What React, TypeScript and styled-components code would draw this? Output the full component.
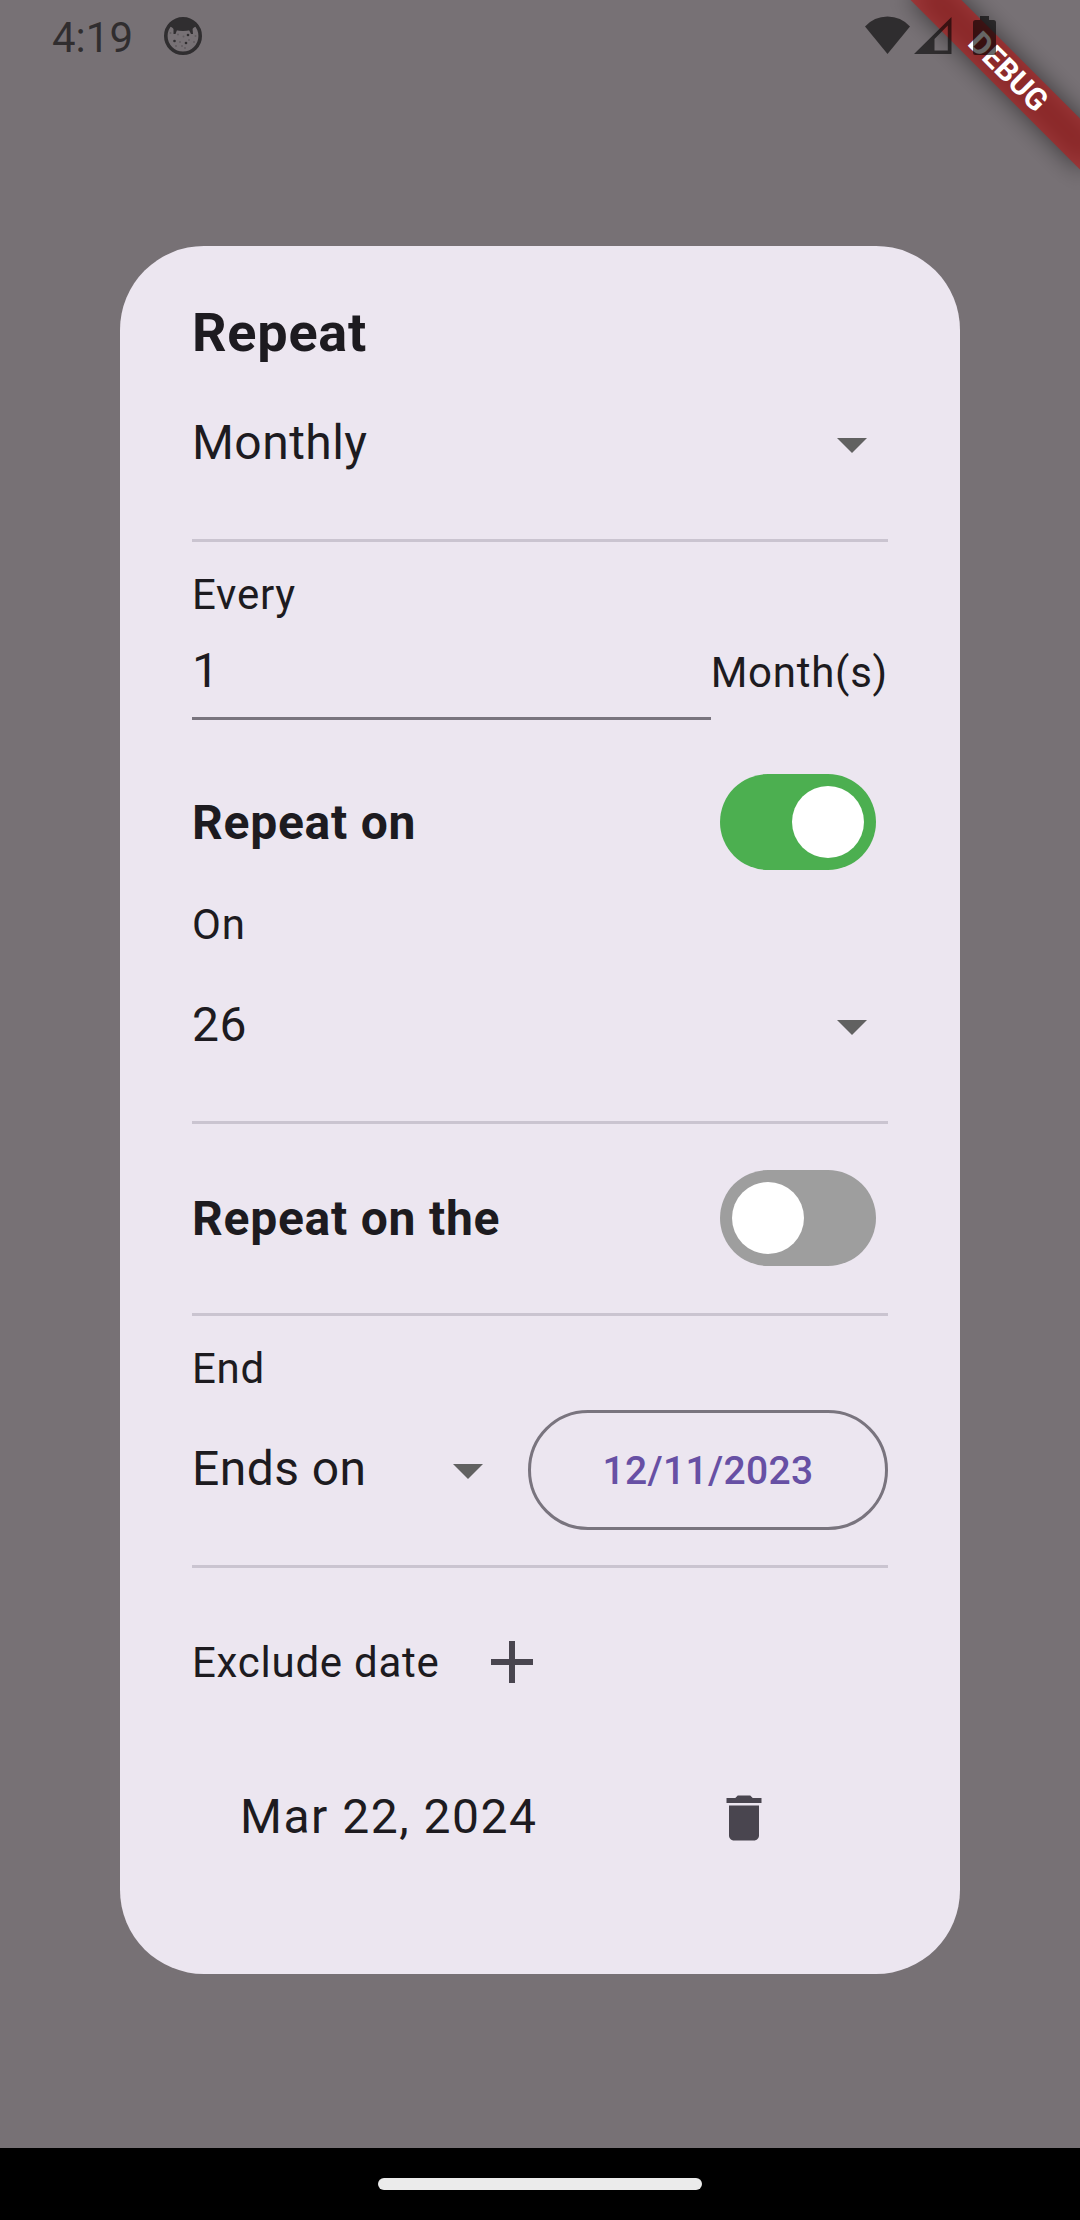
import React, { useState } from "react";
import styled, { createGlobalStyle } from "styled-components";

const GlobalStyle = createGlobalStyle`
  *, *::before, *::after { box-sizing: border-box; }
  body { margin: 0; background: #777175; }
`;

const Screen = styled.div`
  position: relative;
  display: flex;
  flex-direction: column;
  width: 1080px;
  height: 2220px;
  overflow: hidden;
  background: #777175;
  color: #1d1b20;
  font-family: Roboto, "Noto Sans", sans-serif;
`;

const StatusBar = styled.header`
  position: relative;
  z-index: 2;
  display: flex;
  align-items: center;
  height: 72px;
  padding: 0 82px 0 52px;
  color: rgba(0, 0, 0, 0.6);
`;

const Clock = styled.span`
  font-size: 42px;
  line-height: 50px;
  padding-top: 4px;
  width: 111px;
`;

const StatusIcons = styled.div`
  display: flex;
  margin-left: auto;
`;

const Main = styled.main`
  flex: 1;
  padding: 174px 120px 0;
`;

const Dialog = styled.section`
  display: flex;
  flex-direction: column;
  height: 1728px;
  padding: 48px 72px 0;
  border-radius: 84px;
  background: #ece6f0;
`;

const Title = styled.h1`
  margin: 0;
  height: 78px;
  font-size: 54px;
  line-height: 78px;
  font-weight: 700;
  letter-spacing: 0.75px;
`;

const SelectBox = styled.button<{ $width?: number }>`
  display: flex;
  align-items: center;
  justify-content: space-between;
  width: ${(p) => (p.$width ? `${p.$width}px` : "100%")};
  height: 144px;
  padding: 0;
  border: 0;
  background: none;
  color: inherit;
  font: 400 48px/72px Roboto, "Noto Sans", sans-serif;
  letter-spacing: 0.45px;
`;

const SelectText = styled.span`
  padding-bottom: 2px;
`;

const Divider = styled.hr<{ $top: number }>`
  flex: none;
  width: 100%;
  height: 3px;
  margin: ${(p) => p.$top}px 0 0;
  border: 0;
  background: #cac4d0;
`;

const Label = styled.div<{ $top?: number }>`
  height: 60px;
  margin-top: ${(p) => p.$top ?? 0}px;
  font-size: 42px;
  line-height: 62px;
  letter-spacing: 0.75px;
  white-space: nowrap;
`;

const IntervalRow = styled.div`
  display: flex;
  align-items: center;
  height: 96px;
`;

const IntervalInput = styled.div`
  flex: 1;
  height: 96px;
  border-bottom: 3px solid #79747e;
  font-size: 48px;
  line-height: 72px;
  padding-top: 11px;
  letter-spacing: 1.5px;
`;

const ToggleRow = styled.div<{ $top: number }>`
  display: flex;
  align-items: center;
  justify-content: space-between;
  height: 96px;
  margin-top: ${(p) => p.$top}px;
  padding-right: 12px;
`;

const ToggleLabel = styled.span`
  padding-top: 2px;
  font-size: 48px;
  line-height: 68px;
  font-weight: 700;
  letter-spacing: 0.75px;
`;

const Track = styled.button<{ $on: boolean }>`
  display: flex;
  justify-content: ${(p) => (p.$on ? "flex-end" : "flex-start")};
  width: 156px;
  height: 96px;
  padding: 12px;
  border: 0;
  border-radius: 48px;
  background: ${(p) => (p.$on ? "#4caf50" : "#9e9e9e")};
`;

const Knob = styled.span`
  width: 72px;
  height: 72px;
  border-radius: 50%;
  background: #fff;
`;

const EndRow = styled.div`
  display: flex;
  align-items: center;
  justify-content: space-between;
  height: 144px;
`;

const DateButton = styled.button`
  width: 360px;
  height: 120px;
  padding: 2px 0 0;
  border: 3px solid #79747e;
  border-radius: 60px;
  background: none;
  color: #6750a4;
  font: 500 39px/60px Roboto, "Noto Sans", sans-serif;
  letter-spacing: 0.3px;
`;

const ExcludeRow = styled.div`
  display: flex;
  align-items: center;
  height: 144px;
  margin-top: 22px;
`;

const IconButton = styled.button<{ $size: number }>`
  display: grid;
  place-items: center;
  width: ${(p) => p.$size}px;
  height: ${(p) => p.$size}px;
  padding: 0;
  border: 0;
  background: none;
  color: #49454f;
`;

const ExcludedItem = styled.div`
  display: flex;
  align-items: center;
  justify-content: space-between;
  height: 168px;
  padding: 0 72px 0 48px;
`;

const ExcludedDate = styled.span`
  font-size: 48px;
  line-height: 72px;
  letter-spacing: 1.5px;
  padding-bottom: 2px;
`;

const NavBar = styled.footer`
  display: grid;
  place-items: center;
  height: 72px;
  background: #000;
`;

const HomePill = styled.div`
  width: 324px;
  height: 12px;
  border-radius: 6px;
  background: #ebebeb;
`;

const DebugRibbon = styled.div`
  position: absolute;
  z-index: 1;
  top: 54px;
  left: 888px;
  width: 240px;
  height: 36px;
  transform: rotate(45deg);
  color: #fff;
  font-size: 30.6px;
  line-height: 36px;
  font-weight: 700;
  text-align: center;

  &::before,
  &::after {
    content: "";
    position: absolute;
    inset: 0;
  }

  &::before {
    z-index: -2;
    background: rgba(0, 0, 0, 0.5);
    filter: blur(12px);
  }

  &::after {
    z-index: -1;
    background: rgba(183, 28, 28, 0.627);
  }
`;

const DropArrow = () => (
  <svg width="72" height="72" viewBox="0 0 24 24" fill="#616161">
    <path d="M7 10l5 5 5-5z" />
  </svg>
);

const AddIcon = () => (
  <svg width="72" height="72" viewBox="0 0 24 24" fill="currentColor">
    <path d="M19 13h-6v6h-2v-6H5v-2h6V5h2v6h6v2z" />
  </svg>
);

const DeleteIcon = () => (
  <svg width="60" height="60" viewBox="0 0 24 24" fill="currentColor">
    <path d="M6 19c0 1.1.9 2 2 2h8c1.1 0 2-.9 2-2V7H6v12zM19 4h-3.5l-1-1h-5l-1 1H5v2h14V4z" />
  </svg>
);

const FaceIcon = () => (
  <svg width="40" height="40" viewBox="0 0 40 40" fill="#302e30">
    <circle cx="20" cy="20" r="17.2" fill="none" stroke="#302e30" strokeWidth="3.6" />
    <path d="M5 9Q12 2 20 2T35 9L31 11.500Q28 15 20 15T9 11.500Z" />
    <path d="M10.500 12L14 14L12.500 18H10.500ZM29.500 12L26 14L28 18H30Z" />
    <circle cx="25" cy="19" r="1.300" />
    <circle cx="11.500" cy="25" r="1.300" />
    <circle cx="23" cy="27" r="1.300" />
    <g opacity="0.3">
      <circle cx="15" cy="18.500" r="1" />
      <circle cx="20.500" cy="20.500" r="1" />
      <circle cx="7.500" cy="17" r="1" />
      <circle cx="32.500" cy="20" r="1" />
      <circle cx="26" cy="24" r="1" />
      <circle cx="31" cy="26" r="1" />
      <circle cx="17" cy="26" r="1" />
      <circle cx="13" cy="30" r="1" />
      <circle cx="19" cy="30" r="1" />
      <circle cx="22" cy="32" r="1" />
    </g>
  </svg>
);

const DeviceIcons = () => (
  <svg width="136" height="44" viewBox="862 14 136 44" fill="currentColor">
    <path d="M865 26.500Q874 16.500 887.500 16.500T910 26.500L887.500 54Z" />
    <path fillRule="evenodd" d="M914 54L951.500 17V54ZM934.500 50.500H947.800V25.500L934.500 39Z" />
    <path d="M980 16H989V20H993.500Q996 20 996 22.500V52.500Q996 55 993.500 55H975.500Q973 55 973 52.500V22.500Q973 20 975.500 20H980Z" />
  </svg>
);

type SelectProps = { value: string; width?: number };

const Select = ({ value, width }: SelectProps) => (
  <SelectBox $width={width}>
    <SelectText>{value}</SelectText>
    <DropArrow />
  </SelectBox>
);

type ToggleProps = { label: string; initial: boolean; top: number };

const Toggle = ({ label, initial, top }: ToggleProps) => {
  const [on, setOn] = useState(initial);
  return (
    <ToggleRow $top={top}>
      <ToggleLabel>{label}</ToggleLabel>
      <Track $on={on} role="switch" aria-checked={on} onClick={() => setOn(!on)}>
        <Knob />
      </Track>
    </ToggleRow>
  );
};

export default function App() {
  return (
    <>
      <GlobalStyle />
      <Screen>
        <StatusBar>
          <Clock>4:19</Clock>
          <FaceIcon />
          <StatusIcons>
            <DeviceIcons />
          </StatusIcons>
        </StatusBar>
        <Main>
          <Dialog>
            <Title>Repeat</Title>
            <Select value="Monthly" />
            <Divider $top={23} />
            <Label $top={22}>Every</Label>
            <IntervalRow>
              <IntervalInput>1</IntervalInput>
              <Label>Month(s)</Label>
            </IntervalRow>
            <Toggle label="Repeat on" initial top={54} />
            <Label $top={24}>On</Label>
            <Select value="26" />
            <Divider $top={23} />
            <Toggle label="Repeat on the" initial={false} top={46} />
            <Divider $top={47} />
            <Label $top={22}>End</Label>
            <EndRow>
              <Select value="Ends on" width={312} />
              <DateButton>12/11/2023</DateButton>
            </EndRow>
            <Divider $top={23} />
            <ExcludeRow>
              <Label>Exclude date</Label>
              <IconButton $size={144} aria-label="Add date">
                <AddIcon />
              </IconButton>
            </ExcludeRow>
            <ExcludedItem>
              <ExcludedDate>Mar 22, 2024</ExcludedDate>
              <IconButton $size={144} aria-label="Delete date">
                <DeleteIcon />
              </IconButton>
            </ExcludedItem>
          </Dialog>
        </Main>
        <NavBar>
          <HomePill />
        </NavBar>
        <DebugRibbon>DEBUG</DebugRibbon>
      </Screen>
    </>
  );
}
